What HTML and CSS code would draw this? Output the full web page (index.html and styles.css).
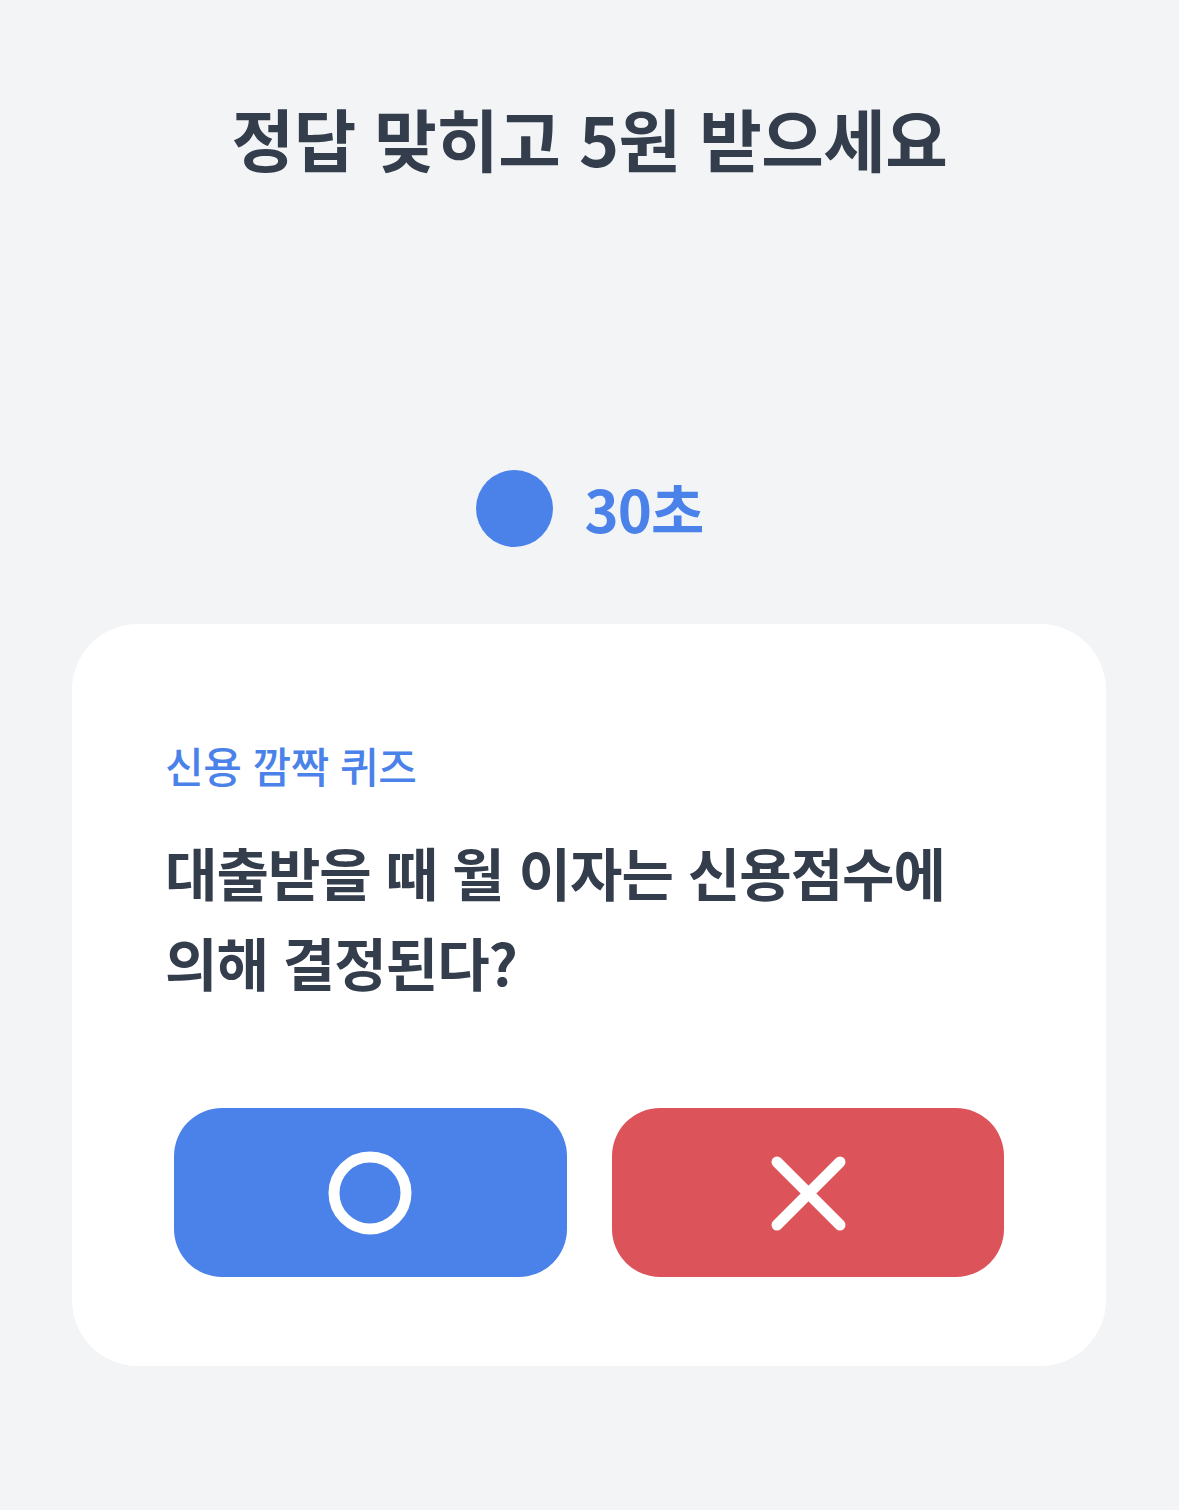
FILE: index.html
```html
<!DOCTYPE html>
<html lang="ko">
<head>
    <meta charset="UTF-8">
    <meta name="viewport" content="width=device-width, initial-scale=1.0">
    <title>신용 깜짝 퀴즈</title>
    <link rel="stylesheet" href="styles.css">
</head>
<body>
    <h1 class="title">정답 맞히고 5원 받으세요</h1>

    <div class="timer">
        <span class="timer-dot"></span>
        <span class="timer-text">30초</span>
    </div>

    <!-- Quiz card -->
    <div class="card">
        <p class="card-label">신용 깜짝 퀴즈</p>
        <p class="question">대출받을 때 월 이자는 신용점수에<br>의해 결정된다?</p>

        <div class="answers">
            <button class="answer answer-o" aria-label="O">
                <svg width="90" height="90" viewBox="0 0 90 90">
                    <circle cx="45" cy="45" r="36" fill="none" stroke="#fff" stroke-width="11"/>
                </svg>
            </button>
            <button class="answer answer-x" aria-label="X">
                <svg width="90" height="90" viewBox="0 0 90 90">
                    <path d="M8 10 L71 73 M71 10 L8 73" transform="translate(6 4)" fill="none" stroke="#fff" stroke-width="11" stroke-linecap="round"/>
                </svg>
            </button>
        </div>
    </div>
</body>
</html>
```

FILE: styles.css
```css
body {
    font-family: 'Noto Sans CJK KR', 'Noto Sans', sans-serif;
    margin: 0;
    padding: 0;
    background-color: #f2f4f6;
    color: #333d4b;
}

.title {
    margin: 0;
    padding-top: 92px;
    font-size: 68px;
    font-weight: 700;
    line-height: 92px;
    text-align: center;
    letter-spacing: -0.5px;
}

/* Timer */
.timer {
    display: flex;
    justify-content: center;
    align-items: center;
    gap: 32px;
    margin-top: 285px;
    height: 78px;
}

.timer-dot {
    width: 77px;
    height: 77px;
    border-radius: 50%;
    background-color: #4a82ea;
}

.timer-text {
    font-size: 58px;
    font-weight: 700;
    color: #4a82ea;
    letter-spacing: -1px;
}

/* Card */
.card {
    background-color: #fff;
    margin: 77px 73px 0 72px;
    border-radius: 66px;
    padding: 111px 93px 89px 93px;
}

.card-label {
    margin: 0;
    font-size: 42px;
    font-weight: 500;
    line-height: 60px;
    color: #4a82ea;
    letter-spacing: -0.5px;
}

.question {
    margin: 31px 0 0 0;
    font-size: 57px;
    font-weight: 700;
    line-height: 90px;
    letter-spacing: -1px;
}

.answers {
    display: flex;
    gap: 45px;
    margin: 102px 9px 0 9px;
}

.answer {
    flex: 1;
    height: 169px;
    border: none;
    border-radius: 48px;
    display: flex;
    align-items: center;
    justify-content: center;
    padding: 0;
    cursor: pointer;
}

.answer-o {
    background-color: #4a82ea;
}

.answer-x {
    background-color: #dc5359;
}
```
